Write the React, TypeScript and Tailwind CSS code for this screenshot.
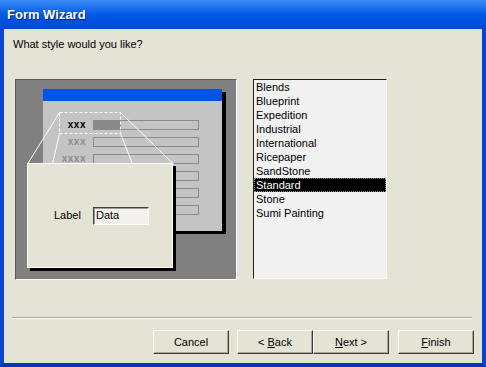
import React from "react";

const STYLES = [
  "Blends",
  "Blueprint",
  "Expedition",
  "Industrial",
  "International",
  "Ricepaper",
  "SandStone",
  "Standard",
  "Stone",
  "Sumi Painting",
];

const FIELD_ROWS = [
  { label: "xxx", y: "top-[31px]", strong: true },
  { label: "xxx", y: "top-[48px]", strong: false },
  { label: "xxxx", y: "top-[65px]", strong: false },
  { label: "", y: "top-[82px]", strong: false },
  { label: "", y: "top-[99px]", strong: false },
  { label: "", y: "top-[116px]", strong: false },
];

function WizButton({ children, className = "" }: { children: React.ReactNode; className?: string }) {
  return (
    <button
      className={`flex h-[24px] w-[76px] items-center justify-center border border-t-white border-l-white border-r-[#3c3c3c] border-b-[#3c3c3c] bg-[#e5e3d6] text-[11px] text-black shadow-[inset_-1px_-1px_0_#aca899] ${className}`}
    >
      {children}
    </button>
  );
}

function Preview() {
  return (
    <div className="relative h-[201px] w-[222px] shrink-0 border border-t-[#5a5a5a] border-l-[#5a5a5a] border-r-white border-b-white bg-[#808080]">
      {/* mini form window */}
      <div className="absolute left-[27px] top-[9px] h-[142px] w-[179px] bg-[#c4c4c4] shadow-[4px_3px_0_#000]">
        <div className="h-[12px] bg-[#0054e3]" />
        {FIELD_ROWS.map((row, i) => (
          <div key={i} className={`absolute left-0 ${row.y} flex h-[10px] w-full items-center`}>
            <span
              className={`w-[44px] pr-[1px] text-right text-[10px] font-bold leading-none tracking-[0.5px] ${
                row.strong ? "text-black" : "text-[#8c8c8c]"
              }`}
            >
              {row.label}
            </span>
            <div className="ml-[6px] flex h-[10px] w-[106px] border border-[#8a8a8a]">
              {row.strong && <div className="h-full w-[27px] bg-[#8a8a8a]" />}
            </div>
          </div>
        ))}
      </div>

      {/* zoom lines */}
      <svg className="absolute left-0 top-0" width="222" height="201" viewBox="0 0 222 201">
        <g stroke="#ffffff" strokeWidth="1" fill="none" strokeDasharray="3 2">
          <rect x="43.5" y="32.5" width="61" height="21" />
        </g>
        <g stroke="#ffffff" strokeWidth="1" fill="none">
          <line x1="43.5" y1="32.5" x2="11.5" y2="84" />
          <line x1="104.5" y1="32.5" x2="157.5" y2="84" />
          <line x1="43.5" y1="53.5" x2="36.5" y2="84" />
          <line x1="104.5" y1="53.5" x2="116.5" y2="84" />
        </g>
      </svg>

      {/* enlarged control */}
      <div className="absolute left-[11px] top-[83px] flex h-[105px] w-[146px] items-center border border-white bg-[#e5e3d6] pl-[26px] shadow-[3px_3px_0_#000]">
        <span className="w-[39px] text-[11px] text-black">Label</span>
        <div className="flex h-[18px] w-[56px] items-center border border-t-[#404040] border-l-[#404040] border-r-white border-b-white bg-[#f2f1ec] pl-[2px] text-[11px] text-black shadow-[inset_1px_1px_0_#9a9a9a]">
          Data
        </div>
      </div>
    </div>
  );
}

export default function App() {
  return (
    <div className="h-[367px] w-[486px] bg-[#e5e3d6] font-['Liberation_Sans',Arial,sans-serif]">
      <div className="flex h-full w-full flex-col">
        <div className="flex h-[29px] items-center bg-gradient-to-b from-[#3a8cf7] via-[#0058e6] to-[#0049d4] pl-[7px] text-[13px] font-bold text-white [text-shadow:1px_1px_0_#0a246a]">
          Form Wizard
        </div>
        <div className="flex flex-1 flex-col border-x-4 border-b-4 border-x-[#0846d2] border-b-[#0637b4]">
          <div className="pl-[9px] pt-[8px] text-[11px] leading-[14px] text-black">What style would you like?</div>

          <div className="ml-[11px] mt-[28px] flex gap-[16px]">
            <Preview />
            <div className="h-[200px] w-[134px] border border-t-[#202020] border-l-[#202020] border-r-[#f8f8f8] border-b-[#f8f8f8] bg-[#f1f1f1]">
              {STYLES.map((s) => (
                <div
                  key={s}
                  className={`h-[14px] pl-[2px] text-[11px] leading-[14px] ${
                    s === "Standard" ? "bg-black text-white outline-1 outline-dotted outline-offset-[-1px] outline-[#888]" : "text-black"
                  }`}
                >
                  {s}
                </div>
              ))}
            </div>
          </div>

          <div className="ml-[8px] mr-[10px] mt-[37px] h-[2px] border-t border-b border-t-[#aca899] border-b-white" />

          <div className="mr-[8px] mt-[11px] flex justify-end">
            <WizButton>Cancel</WizButton>
            <WizButton className="ml-[8px]">
              &lt;&nbsp;<span className="underline">B</span>ack
            </WizButton>
            <WizButton>
              <span className="underline">N</span>ext &gt;
            </WizButton>
            <WizButton className="ml-[9px]">
              <span className="underline">F</span>inish
            </WizButton>
          </div>
        </div>
      </div>
    </div>
  );
}
